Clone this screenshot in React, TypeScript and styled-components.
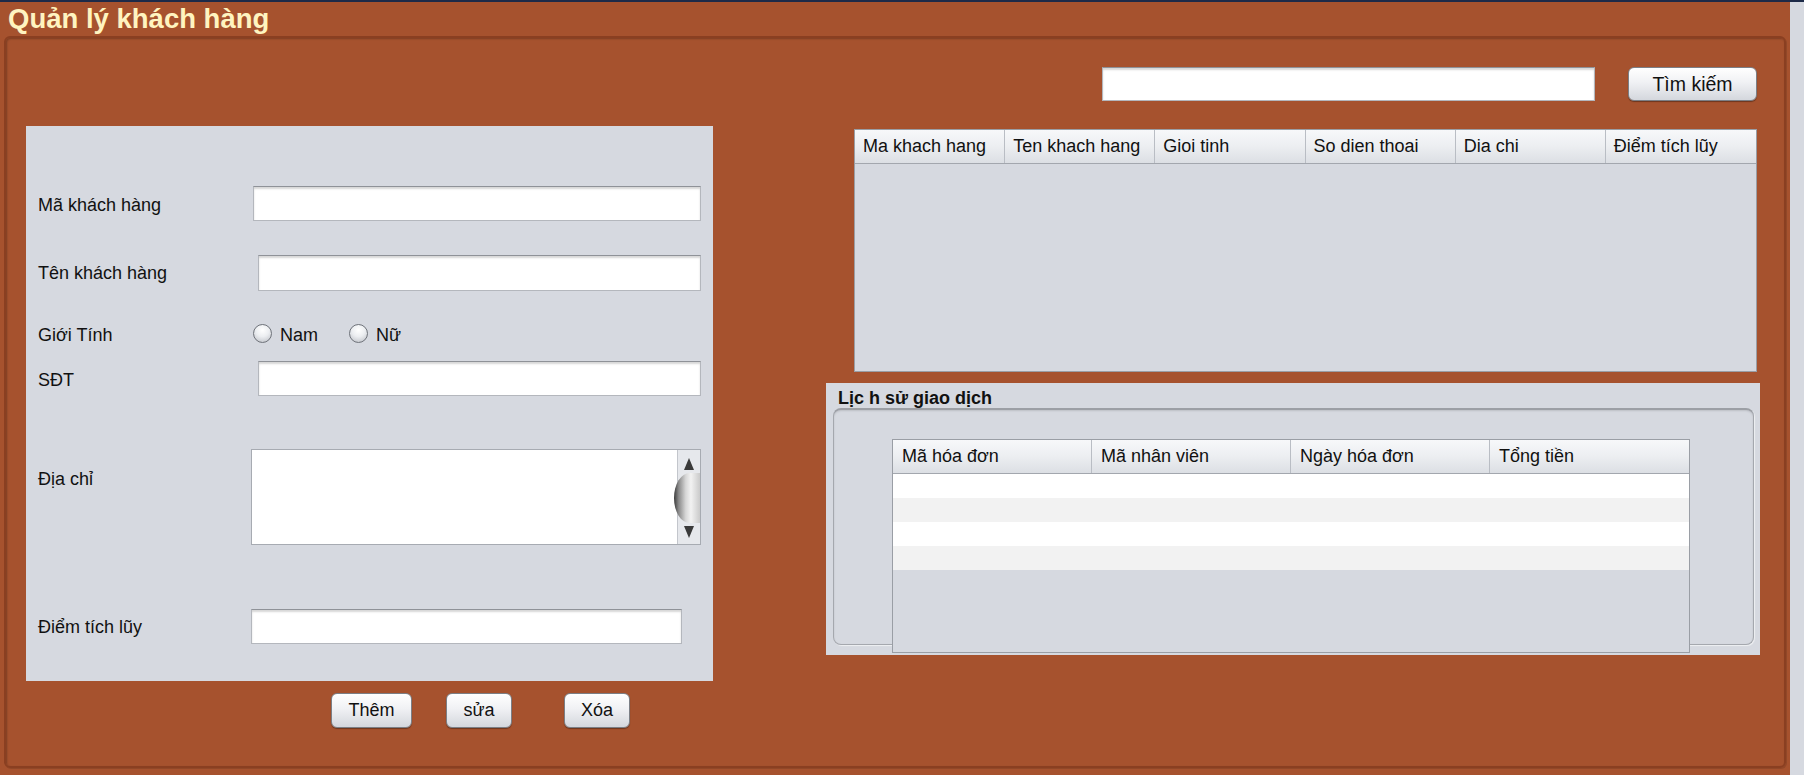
import React from "react";
import styled, { createGlobalStyle } from "styled-components";

const Global = createGlobalStyle`
  html, body { margin: 0; padding: 0; }
  body {
    width: 1804px;
    height: 775px;
    overflow: hidden;
    background: #d6d9e0;
    font-family: "Liberation Sans", Arial, sans-serif;
  }
`;

const Screen = styled.div`
  width: 1804px;
  height: 775px;
  box-sizing: border-box;
  border-top: 2px solid #1d2a48;
  display: flex;
  background: #d6d9e0;
`;

const Main = styled.div`
  width: 1790px;
  display: flex;
  flex-direction: column;
  background: #a6522e;
`;

const TitleBar = styled.h1`
  margin: 0;
  height: 34px;
  padding-left: 8px;
  font: bold 27.5px "Liberation Sans", Arial, sans-serif;
  line-height: 34px;
  color: #fff4c0;
  overflow: hidden;
`;

const Frame = styled.div`
  flex: 1;
  margin: 0 4px 7px 4px;
  border: 2px solid #8a3f21;
  border-radius: 6px;
  box-shadow: inset 1px 1px 2px rgba(0, 0, 0, 0.25), 1px 1px 0 rgba(0, 0, 0, 0.12);
  display: flex;
  align-items: flex-start;
`;

const LeftCol = styled.div`
  margin: 88px 0 0 20px;
  width: 687px;
  display: flex;
  flex-direction: column;
`;

const FormPanel = styled.div`
  height: 555px;
  background: #d6d9e0;
  padding-left: 12px;
  display: flex;
  flex-direction: column;
`;

const Row = styled.div<{ $at: number; $w: number; $mt: number; $h: number; $top?: boolean }>`
  margin-top: ${(p) => p.$mt}px;
  height: ${(p) => p.$h}px;
  display: grid;
  grid-template-columns: ${(p) => p.$at - 12}px ${(p) => p.$w}px;
  align-items: ${(p) => (p.$top ? "start" : "center")};
`;

const Label = styled.span<{ $pt?: number }>`
  font-size: 18px;
  color: #111;
  padding-top: ${(p) => p.$pt ?? 0}px;
  white-space: nowrap;
`;

const TextBox = styled.div<{ $h?: number }>`
  box-sizing: border-box;
  height: ${(p) => p.$h ?? 35}px;
  background: #fff;
  border: 1px solid #b4b7bd;
  border-top-color: #8f9298;
  box-shadow: inset 0 2px 2px rgba(0, 0, 0, 0.16);
`;

const RadioGroup = styled.div`
  display: flex;
  align-items: center;
`;

const RadioItem = styled.label<{ $w: number }>`
  width: ${(p) => p.$w}px;
  display: flex;
  align-items: center;
  font-size: 18px;
  color: #111;
`;

const RadioCircle = styled.span`
  width: 19px;
  height: 19px;
  box-sizing: border-box;
  border-radius: 50%;
  border: 1px solid #6f737a;
  background: radial-gradient(circle at 50% 30%, #ffffff 0%, #eceef1 45%, #b9bcc3 100%);
  margin-right: 8px;
  margin-top: -3px;
`;

const AreaBox = styled.div`
  box-sizing: border-box;
  height: 96px;
  border: 1px solid #a7abb2;
  display: flex;
  background: #fff;
`;

const AreaText = styled.div`
  flex: 1;
  background: #fff;
`;

const ScrollBar = styled.div`
  width: 23px;
  background: #e6e8ec;
  border-left: 1px solid #c3c6cc;
  display: flex;
  flex-direction: column;
  align-items: center;
  justify-content: space-between;
  padding: 8px 0 6px;
  box-sizing: border-box;
`;

const Thumb = styled.div`
  width: 26px;
  height: 50px;
  margin-left: -4px;
  border-radius: 60% 0 0 60% / 50% 0 0 50%;
  background: linear-gradient(to right, #3a3a3a 0%, #8a8a8a 18%, #d6d6d6 45%, #f2f2f2 65%, #cacaca 100%);
`;

const ButtonRow = styled.div`
  margin-top: 12px;
  padding-left: 305px;
  display: flex;
`;

const Btn = styled.button<{ $w: number; $ml?: number; $h?: number; $fs?: number }>`
  width: ${(p) => p.$w}px;
  height: ${(p) => p.$h ?? 35}px;
  margin-left: ${(p) => p.$ml ?? 0}px;
  padding: 0;
  border: 1px solid #7b7f86;
  border-radius: 6px;
  background: linear-gradient(#ffffff 0%, #f0f1f4 45%, #d4d7dd 100%);
  box-shadow: 0 1px 1px rgba(0, 0, 0, 0.35);
  font-family: "Liberation Sans", Arial, sans-serif;
  font-size: ${(p) => p.$fs ?? 18}px;
  color: #111;
`;

const RightCol = styled.div`
  margin: 29px 0 0 113px;
  width: 934px;
  display: flex;
  flex-direction: column;
`;

const SearchRow = styled.div`
  height: 34px;
  padding-left: 276px;
  display: flex;
`;

const SearchBox = styled(TextBox)`
  width: 493px;
  height: 34px;
`;

const Table = styled.div<{ $w: number; $h: number; $mt: number; $ml?: number }>`
  box-sizing: border-box;
  width: ${(p) => p.$w}px;
  height: ${(p) => p.$h}px;
  margin-top: ${(p) => p.$mt}px;
  margin-left: ${(p) => p.$ml ?? 0}px;
  border: 1px solid #9a9ea5;
  background: #d6d9e0;
  display: flex;
  flex-direction: column;
  overflow: hidden;
`;

const HeadRow = styled.div<{ $cols: number; $h: number }>`
  display: grid;
  grid-template-columns: repeat(${(p) => p.$cols}, 1fr);
  height: ${(p) => p.$h}px;
  flex-shrink: 0;
  background: linear-gradient(#f7f8fa 0%, #eceef1 50%, #dcdfe4 100%);
  border-bottom: 1px solid #a3a7ae;
`;

const HeadCell = styled.div<{ $pl: number }>`
  padding-left: ${(p) => p.$pl}px;
  display: flex;
  align-items: center;
  font-size: 18px;
  color: #111;
  white-space: nowrap;
  overflow: hidden;
  border-right: 1px solid #b9bdc4;
  &:last-child { border-right: none; }
`;

const BodyRow = styled.div<{ $alt: boolean }>`
  height: 24px;
  flex-shrink: 0;
  background: ${(p) => (p.$alt ? "#f2f2f2" : "#ffffff")};
`;

const History = styled.section`
  margin-top: 11px;
  width: 934px;
  height: 272px;
  box-sizing: border-box;
  padding: 5px 0 0 7px;
  background: #d6d9e0;
`;

const HistoryTitle = styled.h2`
  margin: 0 0 0 5px;
  height: 20px;
  line-height: 20px;
  font: bold 18px "Liberation Sans", Arial, sans-serif;
  color: #111;
`;

const TitledBorder = styled.div`
  box-sizing: border-box;
  width: 921px;
  height: 237px;
  padding: 29px 0 0 58px;
  border: 1px solid #a5a8ae;
  border-top: 2px solid #9c9fa5;
  border-radius: 8px;
  box-shadow: inset 0 1px 2px rgba(0, 0, 0, 0.12), 1px 1px 1px rgba(255, 255, 255, 0.6);
`;

const Arrow = ({ up }: { up?: boolean }) => (
  <svg width="10" height="12" viewBox="0 0 10 12">
    <polygon points={up ? "5,0 10,12 0,12" : "0,0 10,0 5,12"} fill="#3a3a3a" />
  </svg>
);

const customerCols = ["Ma khach hang", "Ten khach hang", "Gioi tinh", "So dien thoai", "Dia chi", "Điểm tích lũy"];
const historyCols = ["Mã hóa đơn", "Mã nhân viên", "Ngày hóa đơn", "Tổng tiền"];

export default function App() {
  return (
    <>
      <Global />
      <Screen>
        <Main>
          <TitleBar>Quản lý khách hàng</TitleBar>
          <Frame>
            <LeftCol>
              <FormPanel>
                <Row $at={227} $w={448} $mt={60} $h={35}>
                  <Label $pt={4}>Mã khách hàng</Label>
                  <TextBox />
                </Row>
                <Row $at={232} $w={443} $mt={34} $h={36}>
                  <Label>Tên khách hàng</Label>
                  <TextBox $h={36} />
                </Row>
                <Row $at={227} $w={300} $mt={33} $h={22}>
                  <Label>Giới Tính</Label>
                  <RadioGroup>
                    <RadioItem $w={96}>
                      <RadioCircle />
                      Nam
                    </RadioItem>
                    <RadioItem $w={80}>
                      <RadioCircle />
                      Nữ
                    </RadioItem>
                  </RadioGroup>
                </Row>
                <Row $at={232} $w={443} $mt={15} $h={35}>
                  <Label $pt={4}>SĐT</Label>
                  <TextBox />
                </Row>
                <Row $at={225} $w={450} $mt={53} $h={96} $top>
                  <Label $pt={20}>Địa chỉ</Label>
                  <AreaBox>
                    <AreaText />
                    <ScrollBar>
                      <Arrow up />
                      <Thumb />
                      <Arrow />
                    </ScrollBar>
                  </AreaBox>
                </Row>
                <Row $at={225} $w={431} $mt={64} $h={35}>
                  <Label $pt={2}>Điểm tích lũy</Label>
                  <TextBox />
                </Row>
              </FormPanel>
              <ButtonRow>
                <Btn $w={81}>Thêm</Btn>
                <Btn $w={66} $ml={34}>sửa</Btn>
                <Btn $w={66} $ml={52}>Xóa</Btn>
              </ButtonRow>
            </LeftCol>
            <RightCol>
              <SearchRow>
                <SearchBox />
                <Btn $w={129} $ml={33} $h={34} $fs={19.5}>Tìm kiếm</Btn>
              </SearchRow>
              <Table $w={903} $h={243} $mt={28} $ml={28}>
                <HeadRow $cols={6} $h={33}>
                  {customerCols.map((c) => (
                    <HeadCell key={c} $pl={8}>{c}</HeadCell>
                  ))}
                </HeadRow>
              </Table>
              <History>
                <HistoryTitle>Lịc h sử giao dịch</HistoryTitle>
                <TitledBorder>
                  <Table $w={798} $h={214} $mt={0}>
                    <HeadRow $cols={4} $h={33}>
                      {historyCols.map((c) => (
                        <HeadCell key={c} $pl={9}>{c}</HeadCell>
                      ))}
                    </HeadRow>
                    {[false, true, false, true].map((alt, i) => (
                      <BodyRow key={i} $alt={alt} />
                    ))}
                  </Table>
                </TitledBorder>
              </History>
            </RightCol>
          </Frame>
        </Main>
      </Screen>
    </>
  );
}
